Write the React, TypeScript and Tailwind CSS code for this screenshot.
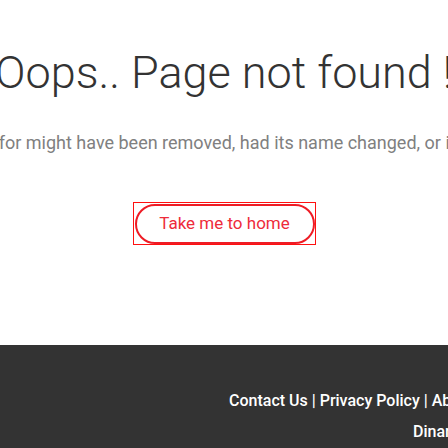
export default function App() {
  return (
    <div className="h-[448px] w-[448px] overflow-hidden bg-white font-['Roboto',sans-serif]">
      <main className="flex h-[345px] flex-col items-center pt-[46px]">
        <h1 className="whitespace-nowrap text-[45px] font-light leading-[1.2] text-[#333333]">
          Oops.. Page not found !
        </h1>
        <p className="mt-[29px] whitespace-nowrap text-[18px] leading-[1.5] text-[#808080]">
          The page you are looking for might have been removed, had its name changed, or is temporarily unavailable.
        </p>
        <div className="mt-[46px] flex h-[43px] w-[183px] items-start border border-[#ff1010] pl-px pt-px">
          <span className="flex h-[40px] w-[181px] items-center justify-center rounded-[20px] border-2 border-[#ee1c25] text-[17px] text-[#ee2b3a]">
            Take me to home
          </span>
        </div>
      </main>

      <footer className="h-[103px] bg-[#333333] pt-[40px] text-[16px] font-medium leading-[31px] text-white">
        <p className="whitespace-nowrap pl-[229px]">Contact Us | Privacy Policy | About Us</p>
        <p className="whitespace-nowrap pl-[413px]">Dinar</p>
      </footer>
    </div>
  );
}
